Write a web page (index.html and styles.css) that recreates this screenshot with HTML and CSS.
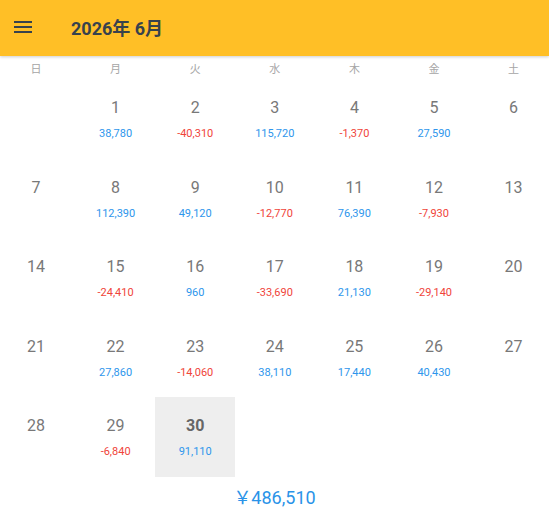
FILE: index.html
```html
<!DOCTYPE html>
<html lang="ja">
<head>
  <meta charset="UTF-8">
  <meta name="viewport" content="width=device-width, initial-scale=1.0">
  <title>カレンダー</title>
  <link rel="stylesheet" href="styles.css">
</head>
<body>
  <header class="app-bar">
    <button class="menu-button" aria-label="メニュー">
      <svg width="18" height="12" viewBox="0 0 18 12">
        <rect x="0" y="0" width="18" height="2" fill="#37424d"/>
        <rect x="0" y="5" width="18" height="2" fill="#37424d"/>
        <rect x="0" y="10" width="18" height="2" fill="#37424d"/>
      </svg>
    </button>
    <div class="title">2026年 6月</div>
  </header>

  <div class="calendar">
    <div class="weekdays">
      <div>日</div><div>月</div><div>火</div><div>水</div><div>木</div><div>金</div><div>土</div>
    </div>
    <div class="days" id="days"></div>
  </div>

  <div class="total">￥486,510</div>

  <script>
    // 日ごとの収支 (null は記録なし)
    const amounts = {
      1: 38780, 2: -40310, 3: 115720, 4: -1370, 5: 27590,
      8: 112390, 9: 49120, 10: -12770, 11: 76390, 12: -7930,
      15: -24410, 16: 960, 17: -33690, 18: 21130, 19: -29140,
      22: 27860, 23: -14060, 24: 38110, 25: 17440, 26: 40430,
      29: -6840, 30: 91110
    };
    const selected = 30;
    const firstWeekday = 1; // 6月1日は月曜
    const daysEl = document.getElementById('days');

    let html = '';
    for (let i = 0; i < firstWeekday; i++) html += '<div class="day"></div>';
    for (let d = 1; d <= 30; d++) {
      const amount = amounts[d];
      let amountHtml = '';
      if (amount !== undefined) {
        const cls = amount < 0 ? 'minus' : 'plus';
        amountHtml = `<div class="amount ${cls}">${amount.toLocaleString('en-US')}</div>`;
      }
      html += `
        <div class="day${d === selected ? ' selected' : ''}">
          <div class="num">${d}</div>
          ${amountHtml}
        </div>`;
    }
    daysEl.innerHTML = html;
  </script>
</body>
</html>
```

FILE: styles.css
```css
body {
  font-family: Roboto, "Noto Sans CJK JP", sans-serif;
  margin: 0;
  background-color: #ffffff;
  overflow: hidden;
}
.app-bar {
  height: 56px;
  background-color: #ffbf26;
  display: flex;
  align-items: center;
  box-shadow: 0 1px 3px rgba(0, 0, 0, 0.2);
  position: relative;
}
.menu-button {
  background: none;
  border: none;
  padding: 0;
  margin-left: 14px;
  width: 18px;
  height: 12px;
  display: flex;
  margin-top: -2px;
}
.title {
  margin-left: 39px;
  font-size: 18px;
  font-weight: bold;
  color: #37424d;
  margin-top: -3px;
}
.calendar {
  overflow: hidden;
}
.weekdays,
.days {
  display: grid;
  grid-template-columns: repeat(7, 79.6px);
  margin-left: -3.8px;
}
.weekdays {
  height: 23px;
  align-items: center;
  font-size: 11px;
  color: #a6a6a6;
  text-align: center;
}
.weekdays div {
  padding-top: 1px;
}
.day {
  height: 79.6px;
  box-sizing: border-box;
  text-align: center;
  padding-top: 17px;
}
.day.selected {
  background-color: #eeeeee;
}
.num {
  font-size: 16px;
  line-height: 24px;
  color: #787878;
}
.selected .num {
  font-weight: bold;
  color: #666666;
}
.amount {
  font-size: 11px;
  line-height: 14px;
  margin-top: 7px;
}
.plus {
  color: #2e96ec;
}
.minus {
  color: #f0443a;
}
.total {
  text-align: center;
  font-size: 18px;
  color: #2a93e8;
  margin-top: 6px;
}
```
